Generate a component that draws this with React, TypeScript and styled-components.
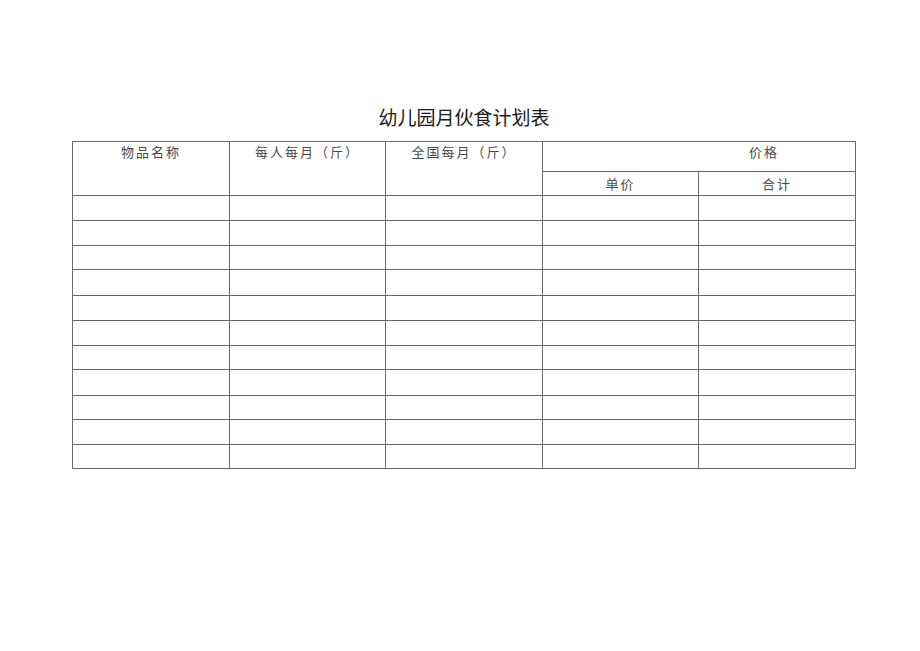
import React from 'react'
import styled, { createGlobalStyle } from 'styled-components'

const GlobalStyle = createGlobalStyle`
  html, body {
    margin: 0;
    padding: 0;
    background: #fff;
  }
  body {
    font-family: 'Noto Sans CJK SC', 'Noto Sans', sans-serif;
    color: #333;
  }
`

const Page = styled.div`
  width: 920px;
  height: 651px;
  padding-top: 104px;
  box-sizing: border-box;
`

const Title = styled.h1`
  margin: 0 0 11px 0;
  padding-left: 8px;
  text-align: center;
  font-size: 19px;
  font-weight: 400;
  line-height: 26px;
  color: #1a1a1a;
`

const Table = styled.table`
  margin-left: 72px;
  width: 783px;
  border-collapse: collapse;
  table-layout: fixed;
`

const Th = styled.th<{ $top?: boolean; $shift?: number }>`
  border: 1px solid #6a6a6a;
  font-size: 13px;
  font-weight: 400;
  letter-spacing: 2px;
  color: #4a4a4a;
  line-height: 18px;
  padding: ${(p) => (p.$top ? '1px 0 0 0' : '0')};
  padding-left: ${(p) => (p.$shift ? `${p.$shift}px` : '0')};
  vertical-align: ${(p) => (p.$top ? 'top' : 'middle')};
  text-align: center;
`

const Tr = styled.tr<{ $h: number; $tint?: boolean }>`
  height: ${(p) => p.$h}px;
  td {
    border-top-color: ${(p) => (p.$tint ? '#8c6f8f' : '#6a6a6a')};
  }
`

const Td = styled.td<{ $green?: boolean }>`
  border: 1px solid #6a6a6a;
  border-left-color: ${(p) => (p.$green ? '#7f9480' : '#6a6a6a')};
  padding: 0;
`

const rows = [
  { h: 25 },
  { h: 25 },
  { h: 24 },
  { h: 26, tint: true },
  { h: 25 },
  { h: 25 },
  { h: 24 },
  { h: 26, tint: true },
  { h: 24 },
  { h: 25 },
  { h: 24 },
]

const App = () => (
  <Page>
    <GlobalStyle />
    <Title>幼儿园月伙食计划表</Title>
    <Table>
      <colgroup>
        <col style={{ width: 157 }} />
        <col style={{ width: 156 }} />
        <col style={{ width: 157 }} />
        <col style={{ width: 156 }} />
        <col style={{ width: 157 }} />
      </colgroup>
      <thead>
        <tr style={{ height: 30 }}>
          <Th rowSpan={2} $top>物品名称</Th>
          <Th rowSpan={2} $top>每人每月（斤）</Th>
          <Th rowSpan={2} $top>全国每月（斤）</Th>
          <Th colSpan={2} $top $shift={130}>价格</Th>
        </tr>
        <tr style={{ height: 24 }}>
          <Th>单价</Th>
          <Th>合计</Th>
        </tr>
      </thead>
      <tbody>
        {rows.map((r, i) => (
          <Tr key={i} $h={r.h} $tint={r.tint}>
            <Td />
            <Td />
            <Td />
            <Td $green />
            <Td $green />
          </Tr>
        ))}
      </tbody>
    </Table>
  </Page>
)

export default App
